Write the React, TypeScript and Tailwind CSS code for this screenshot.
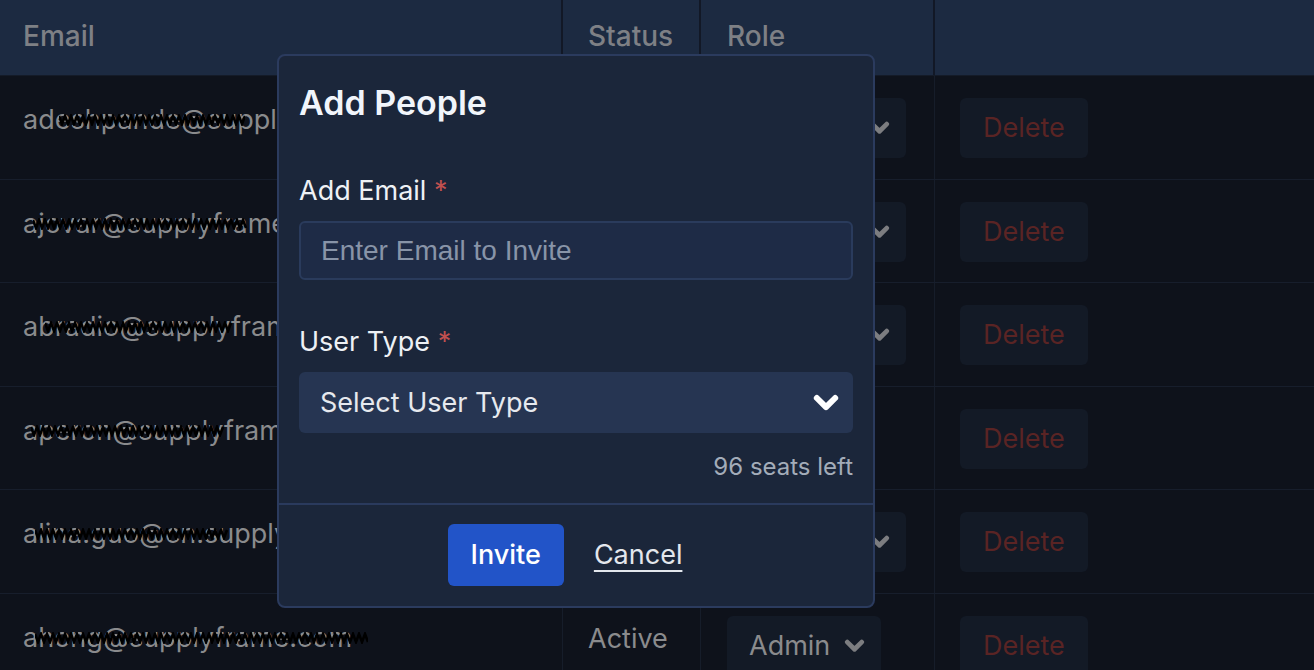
import React from "react";

type Row = {
  email: string;
  status: string;
  role: string;
  mark: [number, number];
};

const rows: Row[] = [
  { email: "adeshpande@supplyframe.com", status: "Active", role: "Member", mark: [36, 222] },
  { email: "ajovar@supplyframe.com", status: "Active", role: "Member", mark: [10, 225] },
  { email: "abradio@supplyframe.com", status: "Active", role: "Member", mark: [22, 210] },
  { email: "aperon@supplyframe.com", status: "Active", role: "User", mark: [8, 202] },
  { email: "alina.guo@cn.supplyframe.com", status: "Active", role: "Member", mark: [12, 206] },
  { email: "ahong@supplyframe.com", status: "Active", role: "Admin", mark: [12, 345] },
];

function Chevron({ className }: { className?: string }) {
  return (
    <svg viewBox="0 0 16 12" className={className} fill="none">
      <polyline
        points="2.5,3 8,8.5 13.5,3"
        stroke="currentColor"
        strokeWidth="3.6"
        strokeLinecap="round"
        strokeLinejoin="round"
      />
    </svg>
  );
}

// redaction marker over the addresses
function Scribble({ from, to }: { from: number; to: number }) {
  const w = to - from;
  const pts: string[] = [];
  for (let x = 0; x <= w; x += 3) {
    const y = (x / 3) % 2 === 0 ? 2 + ((x * 7) % 3) : 10 - ((x * 5) % 3);
    pts.push(`${x},${y}`);
  }
  return (
    <svg
      className="absolute top-[38px]"
      style={{ left: 23 + from, width: w }}
      height="12"
      viewBox={`0 0 ${w} 12`}
    >
      <polyline points={pts.join(" ")} stroke="#000" strokeWidth="2.6" fill="none" />
    </svg>
  );
}

export default function App() {
  return (
    <div
      className="relative w-[1314px] h-[670px] overflow-hidden bg-[#0e121b]"
      style={{ fontFamily: "Inter, 'Noto Sans', sans-serif" }}
    >
      {/* table behind the overlay */}
      <div className="grid grid-cols-[563px_138px_234px_1fr] h-[76px] bg-[#1c2a41] border-b border-[#141b28] text-[28px] font-medium text-[#7e8085]">
        <div className="pl-[23px] pt-[15px] border-r-2 border-[#121826]">Email</div>
        <div className="pl-[25px] pt-[15px] border-r-2 border-[#121826]">Status</div>
        <div className="pl-[26px] pt-[15px] border-r-2 border-[#121826]">Role</div>
        <div />
      </div>

      {rows.map((r, i) => (
        <div
          key={i}
          className="grid grid-cols-[563px_138px_234px_1fr] h-[103.5px] border-b border-[#171e2c] text-[27px] leading-[38px] text-[#8a8b8d]"
        >
          <div className="relative pl-[23px] pt-[25px] border-r border-[#161d2a] whitespace-nowrap overflow-hidden">
            {r.email}
            <Scribble from={r.mark[0]} to={r.mark[1]} />
          </div>
          <div className="pl-[25px] pt-[26px] border-r border-[#161d2a]">{r.status}</div>
          <div className="pl-[26px] pt-[22px] border-r border-[#161d2a]">
            <div className="inline-flex items-center gap-[14px] h-[60px] pl-[22px] pr-[16px] rounded-md bg-[#131a26]">
              <span>{r.role}</span>
              <Chevron className="w-[21px] h-[16px] text-[#7c7d80]" />
            </div>
          </div>
          <div className="pl-[25px] pt-[22px]">
            <div className="inline-flex items-center h-[60px] px-[23px] rounded-md bg-[#131a26] text-[#5a2424]">
              Delete
            </div>
          </div>
        </div>
      ))}

      {/* Add People modal */}
      <div className="absolute left-[277px] top-[54px] w-[598px] h-[554px] flex flex-col rounded-lg border-2 border-[#2b3b5e] bg-[#1b263a] text-[27px] leading-[38px]">
        <div className="px-[20px] pt-[27px] text-[34px] leading-[40px] font-semibold text-[#f1f5fb]">
          Add People
        </div>

        <div className="flex flex-col px-[20px] pt-[49px]">
          <label className="text-[#eef1f5]">
            Add Email <span className="text-[#c0504f]">*</span>
          </label>
          <div className="mt-[11px] h-[59px] flex items-center px-[20px] rounded-md border-2 border-[#2a3b5c] bg-[#1e2b46]">
            <span
              className="text-[28px] text-[#8894a8]"
              style={{ fontFamily: "'Liberation Sans', Arial, sans-serif" }}
            >
              Enter Email to Invite
            </span>
          </div>

          <label className="mt-[43px] text-[#eef1f5]">
            User Type <span className="text-[#c0504f]">*</span>
          </label>
          <div className="mt-[11px] h-[61px] flex items-center justify-between pl-[21px] pr-[13px] rounded-md bg-[#263552] text-[#e6e9ee]">
            <span>Select User Type</span>
            <Chevron className="w-[28px] h-[20px] text-white" />
          </div>

          <div className="mt-[15px] text-right text-[24px] text-[#a3acb9]">96 seats left</div>
        </div>

        <div className="mt-[17px] h-[2px] bg-[#2a3a5d]" />

        <div className="flex-1 flex items-center justify-center gap-[8px] pb-[1px]">
          <button className="h-[62px] px-[23px] rounded-md bg-[#2254c8] text-white font-medium">
            Invite
          </button>
          <button className="h-[62px] px-[22px] text-[#e3e7ed] underline underline-offset-[6px] decoration-2">
            Cancel
          </button>
        </div>
      </div>
    </div>
  );
}
